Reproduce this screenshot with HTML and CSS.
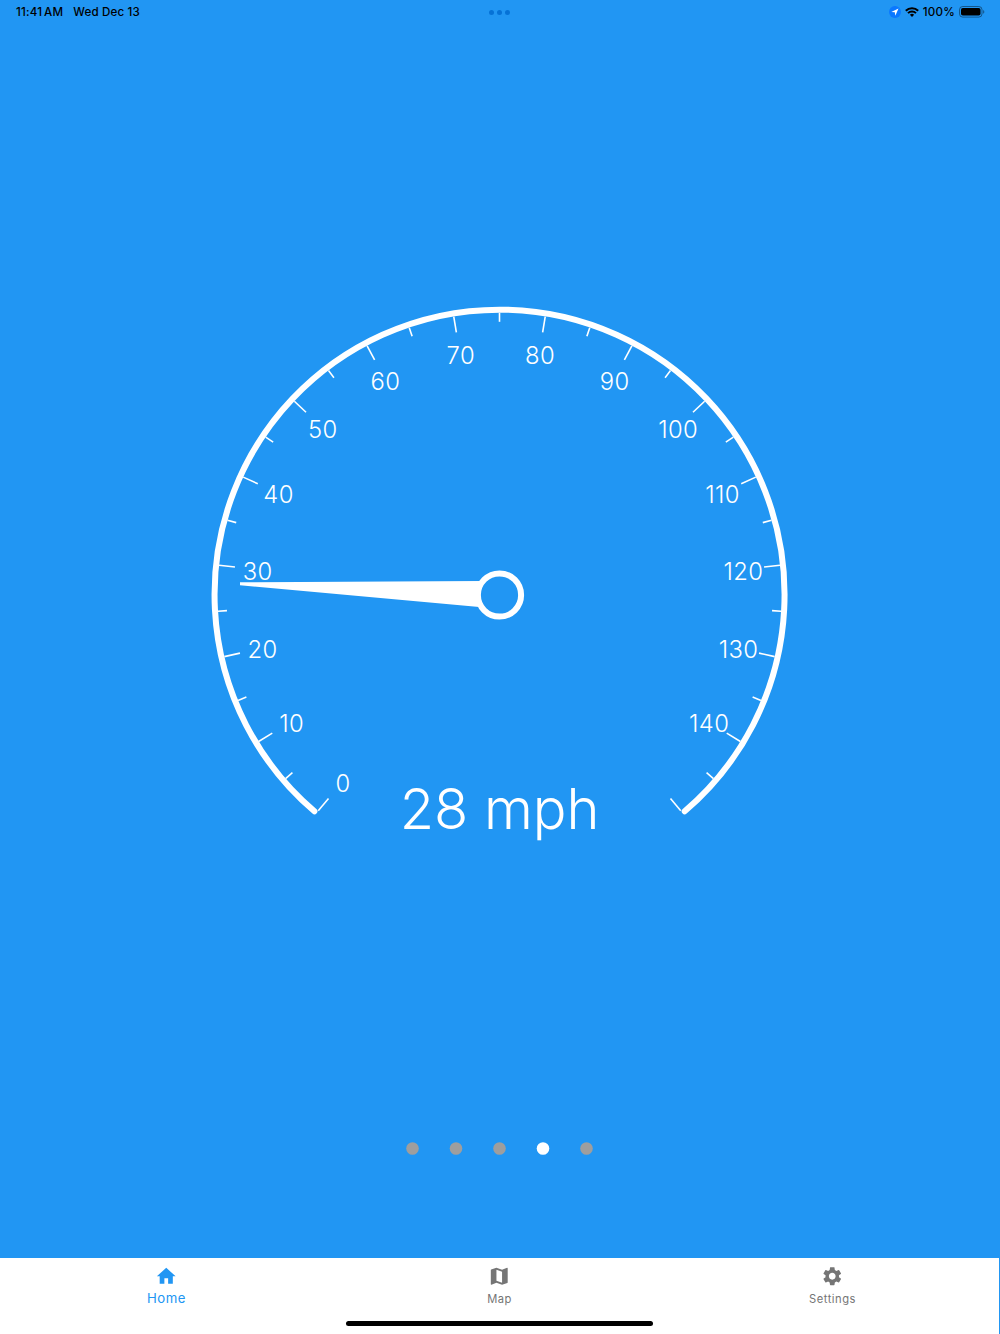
FILE: index.html
```html
<!DOCTYPE html>
<html lang="en">
<head>
<meta charset="utf-8">
<title>Speedometer</title>
<link rel="stylesheet" href="styles.css">
</head>
<body>
<div class="app">
  <header class="status">
    <div class="status-left"><span class="time">11:41 AM</span><span class="date">Wed Dec 13</span></div>
    <div class="multitask"><i></i><i></i><i></i></div>
    <div class="status-right">
      <svg class="loc" viewBox="0 0 12 12"><circle cx="6" cy="6" r="6" fill="#0a78ff"/><path d="M9.500 2.500 2.300 5.900l3.500.4.500 3.400z" fill="#fff"/></svg>
      <svg class="wifi" viewBox="0 0 14 10"><g fill="none" stroke="#000" stroke-width="2"><path d="M.8 3.700a8.800 8.800 0 0 1 12.400 0"/><path d="M3 6.100a5.700 5.700 0 0 1 8 0"/></g><path d="M7 9.900 4.900 7.800a3 3 0 0 1 4.200 0z"/></svg>
      <span class="pct">100%</span>
      <svg class="battery" viewBox="0 0 26 12"><rect x=".5" y=".5" width="22.500" height="10.600" rx="3.200" fill="none" stroke="#000" stroke-opacity=".42"/><rect x="2" y="2" width="19.500" height="7.600" rx="1.800"/><path d="M24.200 4v3.800c1.500-.7 1.500-3.100 0-3.800z" fill-opacity=".45"/></svg>
    </div>
  </header>

  <main class="dial">
    <svg class="gauge" viewBox="200 295 600 560" role="img" aria-label="28 mph">
      <path class="arc" d="M314.400 811.300A285 285 0 1 1 684.700 811.300"/>
      <g class="ticks" id="ticks" transform="translate(499.500 594.800)"></g>
      <g class="labels">
        <text x="343.100" y="791.700">0</text>
        <text x="291.600" y="731.700">10</text>
        <text x="262.500" y="658">20</text>
        <text x="257.600" y="579.500">30</text>
        <text x="278.500" y="502.900">40</text>
        <text x="322.800" y="437.500">50</text>
        <text x="385.500" y="389.500">60</text>
        <text x="460.800" y="364">70</text>
        <text x="540" y="364">80</text>
        <text x="614.600" y="389.500">90</text>
        <text x="678.200" y="437.500">100</text>
        <text x="722.500" y="502.900">110</text>
        <text x="743.500" y="579.500">120</text>
        <text x="738.500" y="658">130</text>
        <text x="709.200" y="731.700">140</text>
      </g>
      <path class="needle" d="M240 582.300 482 580.900V607.300L240 585.200z"/>
      <circle class="hub" cx="499.500" cy="595" r="21.600"/>
      <text class="speed" x="499.600" y="829">28 mph</text>
    </svg>
  </main>

  <svg class="pager" viewBox="0 0 188 13">
    <circle cx="6.500" cy="6.500" r="6.300"/><circle cx="50" cy="6.500" r="6.300"/><circle cx="93.500" cy="6.500" r="6.300"/><circle class="on" cx="137" cy="6.500" r="6.300"/><circle cx="180.500" cy="6.500" r="6.300"/>
  </svg>

  <footer class="tabs">
    <nav class="tab-row">
      <a class="tab active"><svg viewBox="0 0 24 24"><path d="M10 20v-6h4v6h5v-8h3L12 3 2 12h3v8z"/></svg><span>Home</span></a>
      <a class="tab"><svg viewBox="0 0 24 24"><path d="m20.500 3-.16.030L15 5.100 9 3 3.360 4.900c-.21.070-.36.250-.36.480V20.500c0 .28.220.5.500.5l.16-.030L9 18.900l6 2.100 5.640-1.900c.21-.070.36-.25.36-.48V3.500c0-.28-.22-.5-.5-.5zM15 19l-6-2.110V5l6 2.110z"/></svg><span>Map</span></a>
      <a class="tab"><svg viewBox="0 0 24 24"><path d="M19.140 12.940c.04-.3.060-.61.060-.94 0-.32-.02-.64-.07-.94l2.030-1.580c.18-.14.230-.41.120-.61l-1.920-3.320c-.12-.22-.37-.29-.59-.22l-2.390.960c-.5-.38-1.030-.7-1.620-.94l-.36-2.540c-.04-.24-.24-.41-.48-.41h-3.840c-.24 0-.43.170-.47.410l-.36 2.540c-.59.240-1.130.570-1.620.940l-2.390-.960c-.22-.08-.47 0-.59.220L2.740 8.870c-.12.210-.08.470.120.610l2.030 1.580c-.05.300-.09.630-.09.940s.020.640.070.940l-2.030 1.580c-.18.140-.23.410-.12.610l1.920 3.320c.120.220.370.290.590.220l2.390-.96c.5.380 1.030.7 1.620.940l.36 2.540c.05.240.240.410.480.410h3.840c.24 0 .44-.17.470-.41l.36-2.540c.59-.24 1.130-.56 1.620-.94l2.390.96c.22.080.470 0 .59-.22l1.920-3.320c.12-.22.070-.47-.12-.61zM12 15.600c-1.980 0-3.600-1.620-3.600-3.600s1.620-3.600 3.600-3.600 3.600 1.620 3.600 3.600-1.620 3.600-3.600 3.600z"/></svg><span>Settings</span></a>
    </nav>
    <div class="home-indicator"></div>
  </footer>
</div>
<script src="gauge.js"></script>
</body>
</html>
```
FILE: styles.css
```css
* { box-sizing: border-box; }
body { margin: 0; font-family: Inter, "Liberation Sans", sans-serif; }
.app {
  width: 1000px; height: 1334px; background: #2196f3;
  display: flex; flex-direction: column; overflow: hidden;
}
.status {
  height: 24px; padding: 0 15px; font-size: 11.6px; font-weight: 500; color: #000;
  display: grid; grid-template-columns: 1fr auto 1fr; align-items: center;
}
.status-left { display: flex; gap: 10px; white-space: nowrap; padding-left: 1px; }
.time { letter-spacing: .2px; word-spacing: -1.5px; }
.date { letter-spacing: .16px; }
.multitask { display: flex; gap: 3px; position: relative; left: -.5px; }
.multitask i { width: 5px; height: 5px; border-radius: 50%; background: #0672d6; }
.status-right { display: flex; justify-content: flex-end; align-items: center; }
.loc { width: 12px; height: 12px; margin-right: 4px; }
.wifi { width: 14px; height: 10px; margin-right: 4px; }
.pct { margin-right: 4px; letter-spacing: .25px; }
.battery { width: 26px; height: 12px; }
.dial { padding-top: 271px; display: flex; justify-content: center; }
.gauge { width: 600px; height: 560px; display: block; }
.arc { fill: none; stroke: #fff; stroke-width: 6; stroke-linecap: round; }
.ticks { stroke: #fff; stroke-width: 1.6; }
.labels { fill: #fff; font-size: 23.8px; font-weight: 270; letter-spacing: .4px; text-anchor: middle; }
.needle { fill: #fff; }
.hub { fill: #2196f3; stroke: #fff; stroke-width: 6; }
.speed { fill: #fff; font-size: 56px; font-weight: 300; text-anchor: middle; }
.pager { width: 188px; height: 13px; margin: 287px 0 0 406px; fill: #9e9e9e; }
.pager .on { fill: #fff; }
.tabs {
  margin: auto 1px 0 0; height: 76.5px; background: #fff;
  display: flex; flex-direction: column; justify-content: space-between; align-items: center;
  padding-bottom: 8px;
}
.tab-row { width: 100%; display: grid; grid-template-columns: repeat(3, 1fr); }
.tab {
  display: flex; flex-direction: column; align-items: center; padding-top: 7px;
  color: #757575; font-size: 11.2px; letter-spacing: .5px;
}
.tab svg { width: 22.5px; height: 22.5px; fill: currentColor; }
.tab span { line-height: 20px; margin-top: 1.5px; }
.tab.active { color: #2196f3; font-size: 13.2px; }
.tab.active span { margin-top: .5px; }
.home-indicator { width: 307px; height: 5px; border-radius: 3px; background: #000; }
```
FILE: gauge.js
```js
// One tick every 5 mph, a long one every 10, over a 280 degree sweep.
const ticks = document.getElementById('ticks');
for (let i = 0; i <= 30; i++) {
  const line = document.createElementNS('http://www.w3.org/2000/svg', 'line');
  line.setAttribute('y1', -282);
  line.setAttribute('y2', i % 2 ? -273 : -266);
  line.setAttribute('transform', `rotate(${-140 + i * 280 / 30})`);
  ticks.appendChild(line);
}
```
